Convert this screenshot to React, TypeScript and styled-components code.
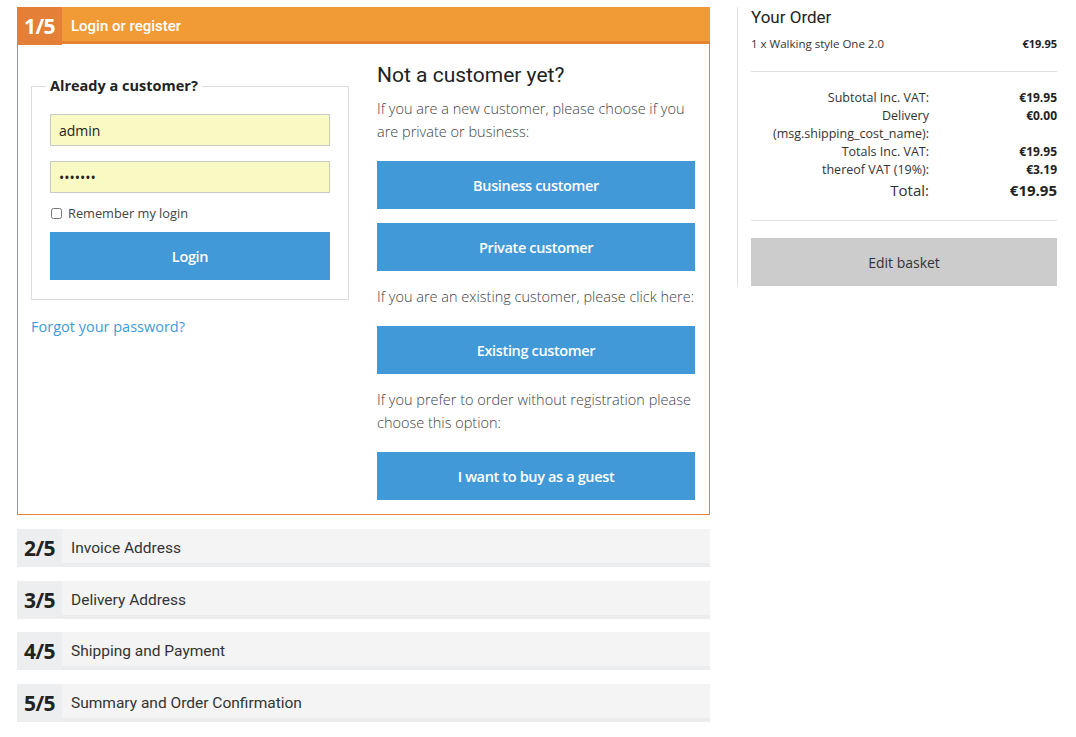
import React from "react";
import styled, { createGlobalStyle } from "styled-components";

const Global = createGlobalStyle`
  html, body { margin: 0; padding: 0; background: #fff; }
  body { font-family: "Open Sans", "Liberation Sans", sans-serif; color: #333; }
  * { box-sizing: border-box; }
`;

const Page = styled.div`
  display: flex;
  align-items: flex-start;
  padding: 7px 19px 0 17px;
`;

const Main = styled.div`
  width: 693px;
  display: flex;
  flex-direction: column;
  gap: 13.4px;
`;

const Step = styled.section``;

const StepBar = styled.div`
  display: flex;
  height: 38px;
`;

const StepNum = styled.div<{ $active?: boolean }>`
  width: 45px;
  flex: none;
  display: flex;
  align-items: center;
  justify-content: center;
  font-family: "Open Sans", sans-serif;
  font-weight: 700;
  font-size: 21px;
  letter-spacing: -0.5px;
  color: ${(p) => (p.$active ? "#fff" : "#222")};
  background: ${(p) => (p.$active ? "#e37f36" : "#eceeef")};
`;

const StepTitle = styled.div<{ $active?: boolean }>`
  flex: 1;
  display: flex;
  align-items: center;
  padding-left: 9px;
  padding-top: ${(p) => (p.$active ? "3px" : "4px")};
  height: ${(p) => (p.$active ? "37px" : "38px")};
  font-family: Roboto, "Liberation Sans", sans-serif;
  font-size: ${(p) => (p.$active ? "15px" : "15.5px")};
  font-weight: ${(p) => (p.$active ? 500 : 400)};
  color: ${(p) => (p.$active ? "#fff" : "#333")};
  background: ${(p) => (p.$active ? "#f09b36" : "#f4f4f4")};
  border-bottom: ${(p) => (p.$active ? "3px solid #e48336" : "4px solid #eaeced")};
`;

const Panel = styled.div`
  border: 1px solid #e48336;
  border-top: none;
  margin-top: -1px;
  padding: 19px 14px 14px 13px;
  display: grid;
  grid-template-columns: 318px 318px;
  column-gap: 28px;
  align-items: start;
  margin-bottom: 1px;
`;

const Col = styled.div`
  display: flex;
  flex-direction: column;
`;

const Fieldset = styled.fieldset`
  margin: 13px 0 0;
  border: 1px solid #dcdcdc;
  padding: 18px 18px 19px 18px;
  display: flex;
  flex-direction: column;
`;

const Legend = styled.legend`
  padding: 0 4px;
  margin-left: -4px;
  font-size: 14.5px;
  font-weight: 700;
  color: #222;
  line-height: 20px;
`;

const Input = styled.input`
  width: 100%;
  height: 32px;
  border: 1px solid #c9c9c9;
  background: #f9fac3;
  padding: 0 8px;
  font-family: "Open Sans", sans-serif;
  font-size: 14px;
  color: #222;
  margin: 0 0 15px;
  outline: none;
`;

const CheckRow = styled.label`
  display: flex;
  align-items: center;
  gap: 6px;
  font-size: 12.8px;
  color: #444;
  height: 18px;
  margin: -4px 0 10px;
`;

const Check = styled.input`
  margin: 0 0 0 1px;
  width: 11px;
  height: 11px;
`;

const Button = styled.button<{ $grey?: boolean }>`
  width: 100%;
  height: 48px;
  border: none;
  background: ${(p) => (p.$grey ? "#cccccc" : "#4199d7")};
  color: ${(p) => (p.$grey ? "#333" : "#fff")};
  font-family: "Open Sans", sans-serif;
  font-size: ${(p) => (p.$grey ? "14px" : "14.5px")};
  font-weight: ${(p) => (p.$grey ? 400 : 600)};
  letter-spacing: ${(p) => (p.$grey ? "0" : "-0.35px")};
  cursor: pointer;
  padding: 0;
`;

const Forgot = styled.a`
  margin-top: 17px;
  font-size: 14.5px;
  color: #3f9bd6;
  text-decoration: none;
  line-height: 20px;
`;

const Heading = styled.h2`
  margin: 0 0 10px;
  font-family: Roboto, "Liberation Sans", sans-serif;
  font-weight: 400;
  font-size: 21px;
  line-height: 24px;
  color: #222;
`;

const Text = styled.p`
  margin: 0 0 18px;
  font-size: 14.5px;
  font-weight: 300;
  line-height: 23px;
  color: #444;
`;

const Stack = styled.div`
  display: flex;
  flex-direction: column;
  gap: 14px;
  margin-bottom: 14px;
  &:last-child { margin-bottom: 0; }
`;

const Aside = styled.aside`
  margin-left: 27px;
  border-left: 1px solid #e2e2e2;
  padding-left: 13px;
  width: 320px;
`;

const OrderTitle = styled.h3`
  margin: 0;
  font-family: Roboto, "Liberation Sans", sans-serif;
  font-weight: 400;
  font-size: 17px;
  line-height: 20px;
  color: #222;
`;

const ItemRow = styled.div`
  display: flex;
  justify-content: space-between;
  font-size: 11.5px;
  line-height: 16px;
  margin-top: 9px;
  color: #333;
  padding-bottom: 19px;
  border-bottom: 1px solid #e0e0e0;
`;

const Bold = styled.span`
  font-weight: 700;
  font-size: 11px;
  color: #222;
`;

const Totals = styled.div`
  display: grid;
  grid-template-columns: 178px 1fr;
  padding: 17px 0 18px;
  border-bottom: 1px solid #e0e0e0;
  margin-bottom: 17px;
`;

const Label = styled.div<{ $big?: boolean }>`
  text-align: right;
  font-size: ${(p) => (p.$big ? "15px" : "12.5px")};
  line-height: ${(p) => (p.$big ? "23px" : "18px")};
  color: #333;
`;

const Value = styled.div<{ $big?: boolean }>`
  text-align: right;
  font-weight: 700;
  font-size: ${(p) => (p.$big ? "15px" : "12px")};
  line-height: ${(p) => (p.$big ? "23px" : "18px")};
  color: #222;
`;

const steps = [
  { n: "2/5", t: "Invoice Address" },
  { n: "3/5", t: "Delivery Address" },
  { n: "4/5", t: "Shipping and Payment" },
  { n: "5/5", t: "Summary and Order Confirmation" },
];

const totals: [string, string][] = [
  ["Subtotal Inc. VAT:", "€19.95"],
  ["Delivery (msg.shipping_cost_name):", "€0.00"],
  ["Totals Inc. VAT:", "€19.95"],
  ["thereof VAT (19%):", "€3.19"],
];

export default function App() {
  return (
    <>
      <Global />
      <Page>
        <Main>
          <Step>
            <StepBar>
              <StepNum $active>1/5</StepNum>
              <StepTitle $active>Login or register</StepTitle>
            </StepBar>
            <Panel>
              <Col>
                <Fieldset>
                  <Legend>Already a customer?</Legend>
                  <Input defaultValue="admin" />
                  <Input type="password" defaultValue="1234567" />
                  <CheckRow>
                    <Check type="checkbox" />
                    Remember my login
                  </CheckRow>
                  <Button>Login</Button>
                </Fieldset>
                <Forgot href="#">Forgot your password?</Forgot>
              </Col>
              <Col>
                <Heading>Not a customer yet?</Heading>
                <Text>If you are a new customer, please choose if you are private or business:</Text>
                <Stack>
                  <Button>Business customer</Button>
                  <Button>Private customer</Button>
                </Stack>
                <Text>If you are an existing customer, please click here:</Text>
                <Stack>
                  <Button>Existing customer</Button>
                </Stack>
                <Text>If you prefer to order without registration please choose this option:</Text>
                <Stack>
                  <Button>I want to buy as a guest</Button>
                </Stack>
              </Col>
            </Panel>
          </Step>
          {steps.map((s) => (
            <Step key={s.n}>
              <StepBar>
                <StepNum>{s.n}</StepNum>
                <StepTitle>{s.t}</StepTitle>
              </StepBar>
            </Step>
          ))}
        </Main>
        <Aside>
          <OrderTitle>Your Order</OrderTitle>
          <ItemRow>
            <span>1 x Walking style One 2.0</span>
            <Bold>€19.95</Bold>
          </ItemRow>
          <Totals>
            {totals.map(([l, v]) => (
              <React.Fragment key={l}>
                <Label>{l}</Label>
                <Value>{v}</Value>
              </React.Fragment>
            ))}
            <Label $big>Total:</Label>
            <Value $big>€19.95</Value>
          </Totals>
          <Button $grey>Edit basket</Button>
        </Aside>
      </Page>
    </>
  );
}
